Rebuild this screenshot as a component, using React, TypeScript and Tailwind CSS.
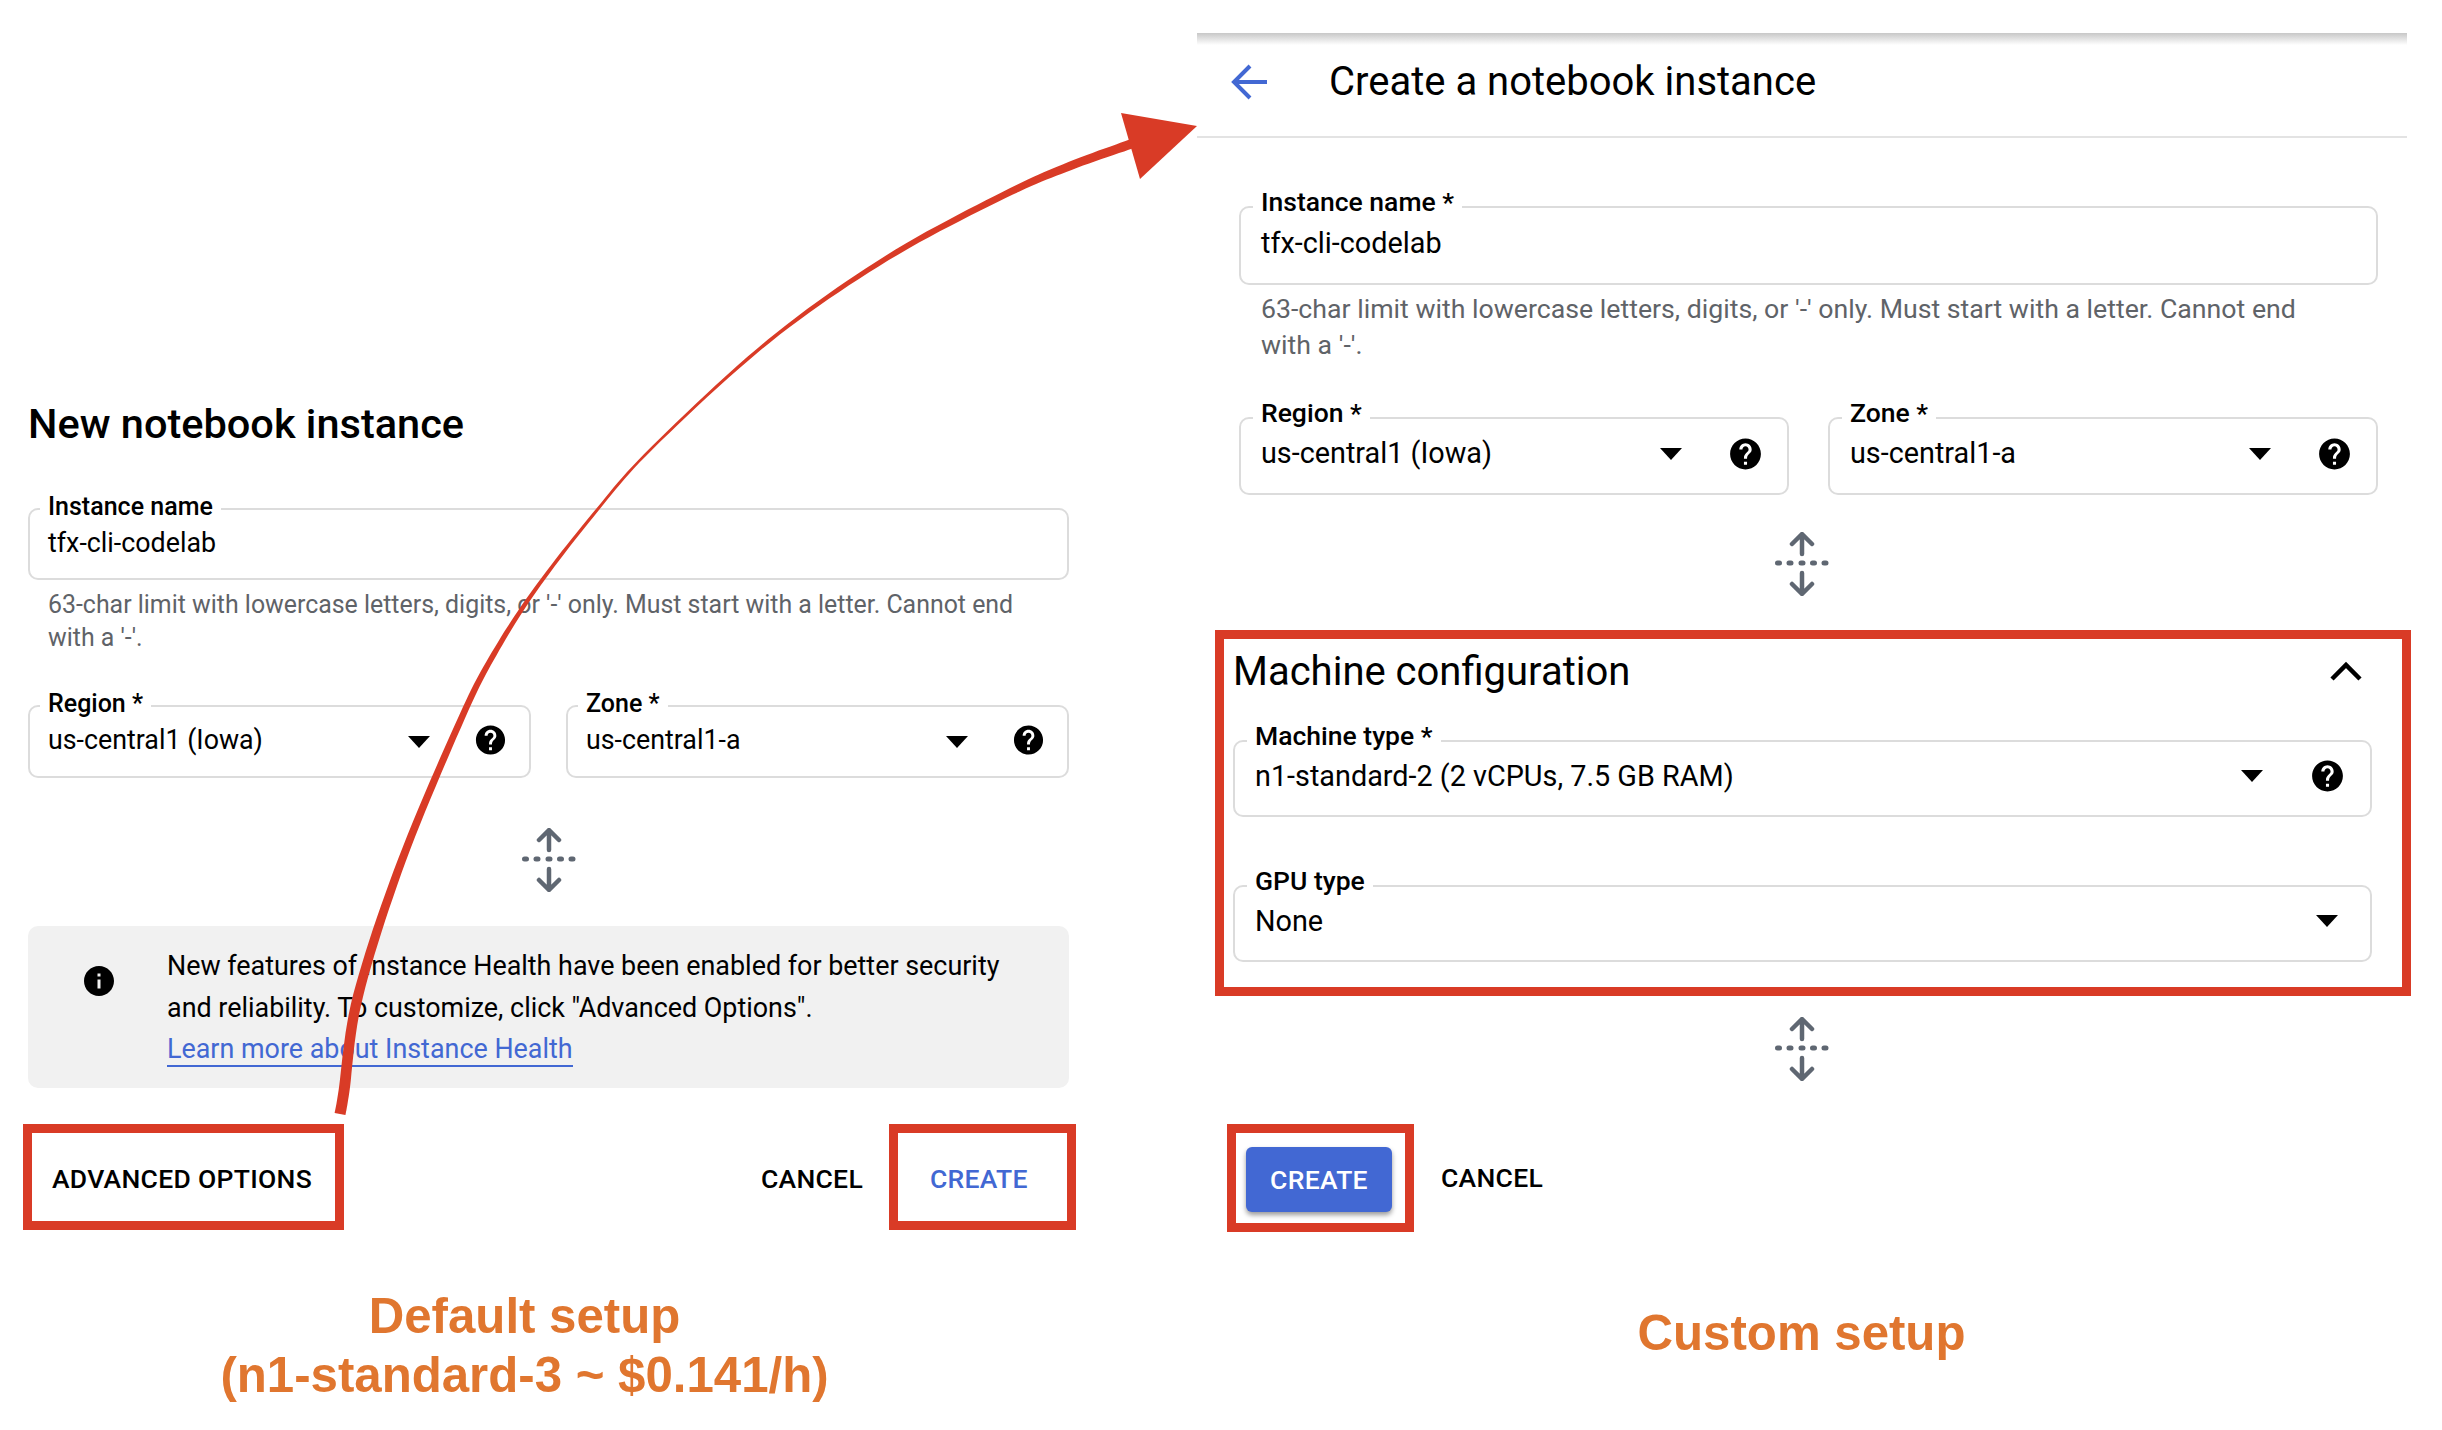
import type { ReactNode } from "react";

const spine: [number, number, number][] = [
  [1134, 143, 9.5],
  [1070, 166, 8.5],
  [1004, 195, 7],
  [887, 258, 5.5],
  [769, 341, 3.5],
  [652, 448, 2.5],
  [593, 515, 3],
  [535, 590, 4],
  [494, 654, 5.5],
  [462, 717, 6.5],
  [402, 860, 8],
  [358, 996, 10],
  [344, 1091, 11],
  [340, 1114, 11],
];

// catmull-rom through the spine, offset on both sides for a tapered stroke
function taperedPath(points: [number, number, number][]) {
  const samples: [number, number, number][] = [];
  for (let i = 0; i < points.length - 1; i++) {
    const p0 = points[Math.max(i - 1, 0)];
    const p1 = points[i];
    const p2 = points[i + 1];
    const p3 = points[Math.min(i + 2, points.length - 1)];
    for (let s = 0; s < 12; s++) {
      const t = s / 12;
      const at = (k: number) =>
        0.5 * (2 * p1[k] + (p2[k] - p0[k]) * t + (2 * p0[k] - 5 * p1[k] + 4 * p2[k] - p3[k]) * t * t + (3 * p1[k] - p0[k] - 3 * p2[k] + p3[k]) * t * t * t);
      samples.push([at(0), at(1), p1[2] + (p2[2] - p1[2]) * t]);
    }
  }
  samples.push(points[points.length - 1]);

  const left: string[] = [];
  const right: string[] = [];
  samples.forEach(([x, y, w], i) => {
    const prev = samples[Math.max(i - 1, 0)];
    const next = samples[Math.min(i + 1, samples.length - 1)];
    const dx = next[0] - prev[0];
    const dy = next[1] - prev[1];
    const len = Math.hypot(dx, dy);
    left.push(`${(x + (dy / len) * w * 0.5).toFixed(1)} ${(y - (dx / len) * w * 0.5).toFixed(1)}`);
    right.unshift(`${(x - (dy / len) * w * 0.5).toFixed(1)} ${(y + (dx / len) * w * 0.5).toFixed(1)}`);
  });
  return `M${left.join("L")}L${right.join("L")}Z`;
}

function HelpIcon({ size }: { size: number }) {
  return (
    <svg width={size} height={size} viewBox="0 0 24 24" fill="#000">
      <path d="M12 2C6.48 2 2 6.48 2 12s4.48 10 10 10 10-4.48 10-10S17.52 2 12 2zm1 17h-2v-2h2v2zm2.07-7.75l-.9.92C13.45 12.9 13 13.5 13 15h-2v-.5c0-1.1.45-2.1 1.17-2.83l1.24-1.26c.37-.36.59-.86.59-1.41 0-1.1-.9-2-2-2s-2 .9-2 2H8c0-2.21 1.79-4 4-4s4 1.79 4 4c0 .88-.36 1.68-.93 2.25z" />
    </svg>
  );
}

function Caret() {
  return (
    <svg width="22" height="12" viewBox="0 0 22 12" fill="#000">
      <path d="M0 0h22L11 12z" />
    </svg>
  );
}

function ResizeIcon() {
  return (
    <svg width="54" height="64" viewBox="0 0 54 64" fill="none" stroke="#5f6772" strokeWidth="4.5" strokeLinecap="round" strokeLinejoin="round">
      <path d="M27 22V3M17 12l10-10 10 10" />
      <path d="M27 41v20M17 52l10 10 10-10" />
      <path d="M2.500 31h2M14 31h2M26 31h2M37.500 31h2M49 31h2" strokeWidth="5" />
    </svg>
  );
}

function Field({ label, value, className, children, big }: { label: string; value: string; className: string; children?: ReactNode; big?: boolean }) {
  return (
    <div className={`relative flex items-center rounded-[10px] border-2 border-[#dcdcdc] ${big ? "pl-[20px]" : "pl-[18px]"} ${className}`}>
      <span className={`absolute bg-white px-[8px] font-medium leading-[30px] text-black ${big ? "left-[12px] top-[-21px] text-[26.500px]" : "left-[10px] top-[-18px] text-[25px]"}`}>
        {label}
      </span>
      <span className={`text-black ${big ? "mb-[4px] text-[28.800px]" : "mb-[2px] text-[26.800px]"}`}>{value}</span>
      {children}
    </div>
  );
}

function Selectors({ caretClass, helpClass, help, size }: { caretClass: string; helpClass: string; help?: boolean; size: number }) {
  return (
    <>
      <span className={`absolute -translate-y-1/2 ${caretClass}`}>
        <Caret />
      </span>
      {help && (
        <span className={`absolute flex -translate-y-1/2 ${helpClass}`}>
          <HelpIcon size={size} />
        </span>
      )}
    </>
  );
}

function RedBox({ className, children }: { className: string; children: ReactNode }) {
  return <div className={`flex items-center border-[9px] border-[#d93b26] ${className}`}>{children}</div>;
}

function Caption({ className, children }: { className: string; children: ReactNode }) {
  return (
    <div className={`text-center font-['Liberation_Sans',sans-serif] text-[49.200px] font-bold leading-[59px] text-[#e0762f] ${className}`}>
      {children}
    </div>
  );
}

export default function App() {
  return (
    <div className="relative flex h-[1430px] w-[2442px] overflow-hidden bg-white font-['Roboto',sans-serif]">
      {/* default setup */}
      <div className="w-[1197px] shrink-0 pl-[28px] pr-[128px] pt-[400px]">
        <h1 className="text-[41.500px] font-medium leading-[48px] text-black">New notebook instance</h1>

        <Field label="Instance name" value="tfx-cli-codelab" className="mt-[60px] h-[72px]" />
        <p className="mt-[8px] pl-[20px] pr-[25px] text-[24.900px] leading-[33px] text-[#5f6368]">
          63-char limit with lowercase letters, digits, or '-' only. Must start with a letter. Cannot end with a '-'.
        </p>

        <div className="mt-[51px] grid grid-cols-2 gap-[35px]">
          <Field label="Region *" value="us-central1 (Iowa)" className="h-[73px]">
            <Selectors caretClass="right-[99px] top-1/2" helpClass="right-[21px] top-[48%]" help size={35} />
          </Field>
          <Field label="Zone *" value="us-central1-a" className="h-[73px]">
            <Selectors caretClass="right-[99px] top-1/2" helpClass="right-[21px] top-[48%]" help size={35} />
          </Field>
        </div>

        <div className="mt-[50px] flex justify-center">
          <ResizeIcon />
        </div>

        <div className="mt-[34px] flex h-[162px] rounded-[10px] bg-[#f1f1f1] pl-[53px] pr-[20px]">
          <svg className="mt-[37px] shrink-0" width="36" height="36" viewBox="0 0 24 24" fill="#000">
            <path d="M12 2C6.48 2 2 6.48 2 12s4.480 10 10 10 10-4.480 10-10S17.520 2 12 2zm1 15h-2v-6h2v6zm0-8h-2V7h2v2z" />
          </svg>
          <div className="ml-[50px] mt-[20px] text-[26.900px] leading-[41.500px] text-black">
            <p>New features of Instance Health have been enabled for better security</p>
            <p>and reliability. To customize, click "Advanced Options".</p>
            <a className="border-b-2 border-[#4268d3] text-[#4268d3]">Learn more about Instance Health</a>
          </div>
        </div>

        <div className="-ml-[5px] -mr-[7px] mt-[36px] flex items-center">
          <RedBox className="h-[106px] w-[321px] pl-[20px] pt-[3px]">
            <span className="text-[26.500px] font-medium tracking-[0.3px] text-black">ADVANCED OPTIONS</span>
          </RedBox>
          <span className="ml-auto mr-[26px] pt-[3px] text-[26.500px] font-medium tracking-[0.3px] text-black">CANCEL</span>
          <RedBox className="h-[106px] w-[187px] pl-[32px] pt-[3px]">
            <span className="text-[26.500px] font-medium tracking-[0.3px] text-[#4268d3]">CREATE</span>
          </RedBox>
        </div>

        <Caption className="mt-[56px] pr-[48px]">
          <p>Default setup</p>
          <p>(n1-standard-3 ~ $0.141/h)</p>
        </Caption>
      </div>

      {/* custom setup */}
      <div className="mt-[33px] w-[1210px] shrink-0">
        <div className="h-[12px] bg-linear-to-b from-[#c8c8c8] to-white" />
        <div className="flex items-center border-b-2 border-[#e3e3e3] pb-[30px] pl-[34px] pt-[13px]">
          <svg width="36" height="36" viewBox="0 0 36 36" fill="none" stroke="#4268d3" strokeWidth="4">
            <path d="M36 18H3M19 2 3 18l16 16" />
          </svg>
          <h1 className="ml-[62px] text-[40px] leading-[48px] text-black">Create a notebook instance</h1>
        </div>

        <div className="pl-[42px] pr-[29px]">
          <Field big label="Instance name *" value="tfx-cli-codelab" className="mt-[68px] h-[79px]" />
          <p className="mt-[6px] pl-[22px] pr-[50px] text-[26.700px] leading-[36px] text-[#5f6368]">
            63-char limit with lowercase letters, digits, or '-' only. Must start with a letter. Cannot end with a '-'.
          </p>

          <div className="mt-[54px] grid grid-cols-2 gap-[39px]">
            <Field big label="Region *" value="us-central1 (Iowa)" className="h-[78px]">
              <Selectors caretClass="right-[105px] top-[47%]" helpClass="right-[23px] top-[47%]" help size={37} />
            </Field>
            <Field big label="Zone *" value="us-central1-a" className="h-[78px]">
              <Selectors caretClass="right-[105px] top-[47%]" helpClass="right-[23px] top-[47%]" help size={37} />
            </Field>
          </div>

          <div className="mt-[37px] flex justify-center pr-[14px]">
            <ResizeIcon />
          </div>

          <div className="-ml-[24px] mt-[34px] w-[1196px] border-[9px] border-[#d93b26] pb-[25px] pl-[9px] pr-[30px] pt-[9px]">
            <div className="flex items-center justify-between">
              <h2 className="text-[40px] leading-[48px] text-black">Machine configuration</h2>
              <svg className="mb-[2px] mr-[10px]" width="32" height="20" viewBox="0 0 32 20" fill="none" stroke="#000" strokeWidth="4.5">
                <path d="M2 18 16 4l14 14" />
              </svg>
            </div>
            <Field big label="Machine type *" value="n1-standard-2 (2 vCPUs, 7.5 GB RAM)" className="mt-[44px] h-[77px]">
              <Selectors caretClass="right-[107px] top-[47%]" helpClass="right-[24px] top-[47%]" help size={37} />
            </Field>
            <Field big label="GPU type" value="None" className="mt-[68px] h-[77px]">
              <Selectors caretClass="right-[32px] top-[47%]" helpClass="" size={37} />
            </Field>
          </div>

          <div className="mt-[21px] flex justify-center pr-[14px]">
            <ResizeIcon />
          </div>

          <div className="-ml-[12px] mt-[43px] flex items-center">
            <RedBox className="h-[108px] w-[187px] pl-[10px] pt-[3px]">
              <button className="h-[65px] w-[146px] rounded-[6px] bg-[#4268d3] text-[26.500px] font-medium tracking-[0.3px] text-white shadow-[0_3px_5px_rgba(0,0,0,0.4)]">
                CREATE
              </button>
            </RedBox>
            <span className="ml-[27px] text-[26.500px] font-medium tracking-[0.3px] text-black">CANCEL</span>
          </div>
        </div>

        <Caption className="mt-[71px] pl-[42px] pr-[43px]">
          <p>Custom setup</p>
        </Caption>
      </div>

      {/* arrow from ADVANCED OPTIONS to the custom page */}
      <svg className="pointer-events-none absolute left-0 top-0" width="2442" height="1430" viewBox="0 0 2442 1430" fill="#d93b26">
        <path d={taperedPath(spine)} />
        <path d="M1197 126 1121 113 1140 179Z" />
      </svg>
    </div>
  );
}
